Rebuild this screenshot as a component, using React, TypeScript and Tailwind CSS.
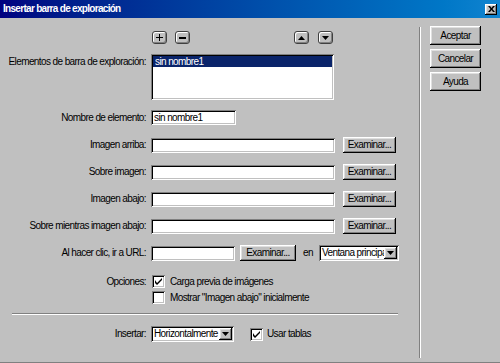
import type { ReactNode } from 'react'

const raised =
  'bg-[#c0c0c0] shadow-[inset_-1px_-1px_0_#000000,inset_1px_1px_0_#ffffff,inset_-2px_-2px_0_#808080,inset_2px_2px_0_#dfdfdf]'
const sunken =
  'bg-white shadow-[inset_1px_1px_0_#808080,inset_-1px_-1px_0_#ffffff,inset_2px_2px_0_#000000,inset_-2px_-2px_0_#c0c0c0]'

function Label({ children }: { children: ReactNode }) {
  return <div className="w-[151px] shrink-0 pr-[5px] text-right whitespace-nowrap">{children}</div>
}

function TextBox({ w, value }: { w: string; value?: string }) {
  return (
    <div className={`${sunken} ${w} h-[15px] pl-[3px] leading-[15px] whitespace-nowrap overflow-hidden`}>
      {value}
    </div>
  )
}

function PushButton({ children, className }: { children: ReactNode; className: string }) {
  return (
    <div className={`${raised} ${className} flex items-center justify-center whitespace-nowrap`}>{children}</div>
  )
}

function Arrow({ up }: { up?: boolean }) {
  return (
    <svg width="7" height="4" viewBox="0 0 7 4">
      <path d={up ? 'M3.5 0 L7 4 L0 4 Z' : 'M0 0 L7 0 L3.5 4 Z'} fill="#000" />
    </svg>
  )
}

function Dropdown({ w, value }: { w: string; value: string }) {
  return (
    <div className={`${sunken} ${w} h-[16px] flex items-center p-[2px]`}>
      <div className="flex-1 pl-[1px] whitespace-nowrap overflow-hidden leading-[12px]">{value}</div>
      <div className={`${raised} w-[13px] h-[12px] flex items-center justify-center shrink-0`}>
        <Arrow />
      </div>
    </div>
  )
}

function Check({ checked }: { checked?: boolean }) {
  return (
    <div className={`${sunken} w-[13px] h-[13px] shrink-0 flex items-center justify-center`}>
      {checked && (
        <svg width="7" height="7" viewBox="0 0 7 7">
          <path d="M0 2 L0 5 L2 7 L7 2 L7 0 L2 5 Z" fill="#000" />
        </svg>
      )}
    </div>
  )
}

function ToolButton({ children }: { children: ReactNode }) {
  return (
    <div className="w-[15px] h-[13px] rounded-[3px] border border-[#404040] bg-[#c0c0c0] shadow-[inset_1px_1px_0_#ffffff,inset_-1px_-1px_0_#808080] flex items-center justify-center">
      {children}
    </div>
  )
}

function ImageRow({ label, top }: { label: string; top: string }) {
  return (
    <div className={`flex items-center h-[16px] ${top}`}>
      <Label>{label}</Label>
      <TextBox w="w-[184px]" />
      <PushButton className="ml-[8px] w-[53px] h-[16px]">Examinar...</PushButton>
    </div>
  )
}

export default function App() {
  return (
    <div className="w-[500px] h-[363px] bg-[#c0c0c0] text-[10px] tracking-[-0.6px] leading-[12px] text-black flex flex-col overflow-hidden font-['Liberation_Sans',Arial,sans-serif]">
      <div className="h-[18px] shrink-0 flex items-center justify-between pl-[3px] pr-[3px] bg-gradient-to-r from-[#000080] to-[#1084d0]">
        <span className="text-white font-bold text-[10px] tracking-[-0.7px] leading-none">Insertar barra de exploración</span>
        <div className={`${raised} w-[12px] h-[11px] flex items-center justify-center`}>
          <svg width="7" height="6" viewBox="0 0 7 6">
            <path d="M0 0 L2 0 L3.5 2 L5 0 L7 0 L4.5 3 L7 6 L5 6 L3.5 4 L2 6 L0 6 L2.5 3 Z" fill="#000" />
          </svg>
        </div>
      </div>

      <div className="flex flex-1 border-b border-[#808080]">
        <div className="w-[419px] shrink-0 flex flex-col pt-[13px]">
          <div className="flex items-center h-[13px] pl-[152px]">
            <ToolButton>
              <svg width="7" height="7" viewBox="0 0 7 7">
                <path d="M3 0 H4 V3 H7 V4 H4 V7 H3 V4 H0 V3 H3 Z" fill="#000" />
              </svg>
            </ToolButton>
            <div className="ml-[8px]">
              <ToolButton>
                <svg width="7" height="2" viewBox="0 0 7 2">
                  <rect width="7" height="2" fill="#000" />
                </svg>
              </ToolButton>
            </div>
            <div className="ml-[104px]">
              <ToolButton>
                <Arrow up />
              </ToolButton>
            </div>
            <div className="ml-[9px]">
              <ToolButton>
                <Arrow />
              </ToolButton>
            </div>
          </div>

          <div className="flex mt-[10px] h-[46px]">
            <Label>
              <div className="pt-[2px]">Elementos de barra de exploración:</div>
            </Label>
            <div className={`${sunken} w-[183px] h-[46px] p-[2px]`}>
              <div className="bg-[#0a246a] text-white h-[11px] leading-[11px] pl-[2px]">sin nombre1</div>
            </div>
          </div>

          <div className="flex items-center h-[15px] mt-[10px]">
            <Label>Nombre de elemento:</Label>
            <TextBox w="w-[85px]" value="sin nombre1" />
          </div>

          <ImageRow label="Imagen arriba:" top="mt-[12px]" />
          <ImageRow label="Sobre imagen:" top="mt-[11px]" />
          <ImageRow label="Imagen abajo:" top="mt-[11px]" />
          <ImageRow label="Sobre mientras imagen abajo:" top="mt-[11px]" />

          <div className="flex items-center h-[16px] mt-[11px]">
            <Label>Al hacer clic, ir a URL:</Label>
            <TextBox w="w-[84px]" />
            <PushButton className="ml-[5px] w-[56px] h-[16px]">Examinar...</PushButton>
            <span className="ml-[7px]">en</span>
            <div className="ml-[6px]">
              <Dropdown w="w-[80px]" value="Ventana principal" />
            </div>
          </div>

          <div className="flex items-center h-[13px] mt-[14px]">
            <Label>Opciones:</Label>
            <div className="ml-[1px] flex items-center gap-[5px]">
              <Check checked />
              <span>Carga previa de imágenes</span>
            </div>
          </div>
          <div className="flex items-center h-[13px] mt-[3px] pl-[152px] gap-[5px]">
            <Check />
            <span>Mostrar "Imagen abajo" inicialmente</span>
          </div>

          <div className="ml-[12px] w-[386px] mt-[9px] border-t border-[#808080] border-b border-b-white" />

          <div className="flex items-center h-[16px] mt-[11px]">
            <Label>Insertar:</Label>
            <Dropdown w="w-[83px]" value="Horizontalmente" />
            <div className="ml-[16px] flex items-center gap-[4px]">
              <Check checked />
              <span>Usar tablas</span>
            </div>
          </div>
        </div>

        <div className="mt-[9px] mb-[4px] w-[2px] border-l border-[#808080] border-r border-r-white" />

        <div className="flex flex-col gap-[4px] pl-[9px] pt-[8px]">
          <PushButton className="w-[51px] h-[19px]">Aceptar</PushButton>
          <PushButton className="w-[51px] h-[19px]">Cancelar</PushButton>
          <PushButton className="w-[51px] h-[19px]">Ayuda</PushButton>
        </div>
      </div>
    </div>
  )
}
